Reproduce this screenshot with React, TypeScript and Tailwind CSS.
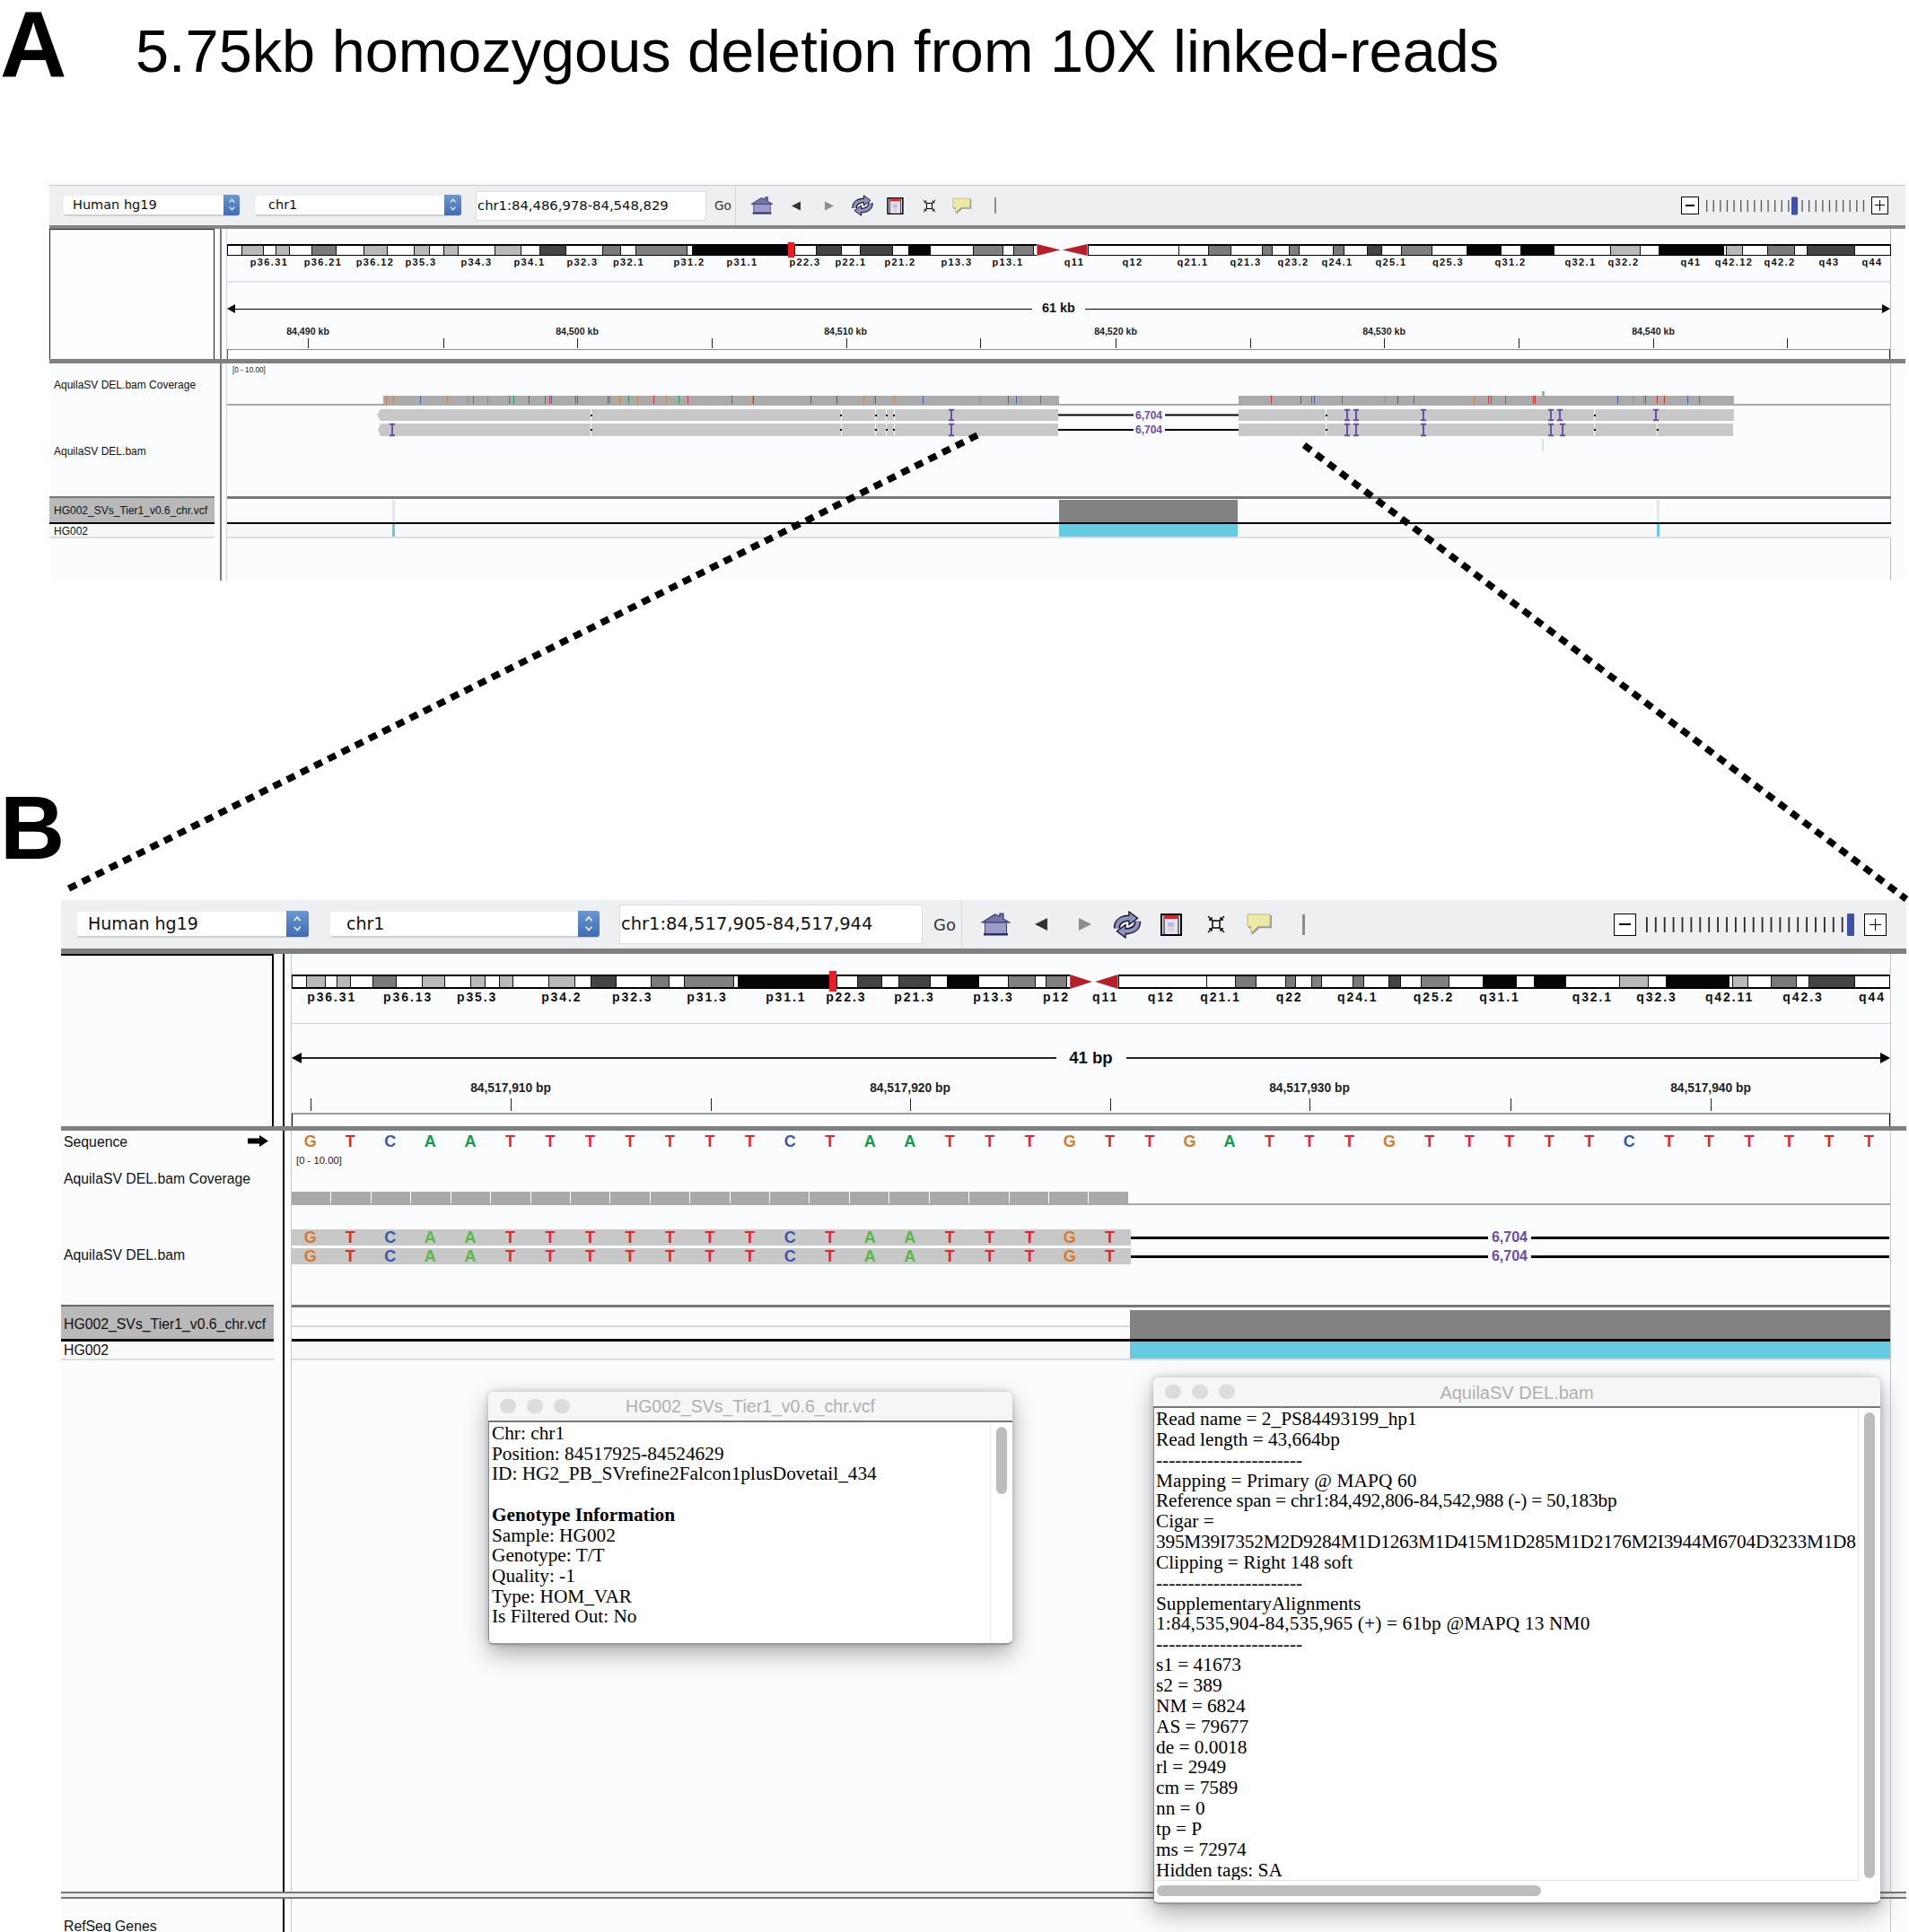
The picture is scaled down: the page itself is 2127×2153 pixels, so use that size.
import React from "react";

type Band = [number, number, string];
const W = "#ffffff", L = "#b9b9b9", M = "#7a7a7a", N = "#808080", D = "#444444", K = "#050505";

const seg = (conv: (z: number) => number, start: number, list: [number, string][]): Band[] => {
  let s = start;
  return list.map(([e, c]) => {
    const b: Band = [conv(s), conv(e), c];
    s = e;
    return b;
  });
};

const a1 = (z: number) => 40 + z / 1.508;
const a2 = (z: number) => 1080 + z / 1.4976;
const b1 = (z: number) => 60 + z / 1.5077;
const b2 = a2;

const bandsA: Band[] = [
  ...seg(a1, 322, [[346, W], [381, L], [402, W], [425, L], [463, W], [503, M], [551, W], [589, L], [635, W], [660, L], [684, W], [709, L], [771, W], [815, L], [846, W], [890, D], [951, W], [982, M], [1008, W], [1094, N], [1102, W], [1263, K], [1274, K], [1311, W], [1353, D], [1384, W], [1438, D], [1466, W], [1523, K]]),
  ...seg(a2, -65, [[6, W], [55, N], [74, W], [106, N], [113, W]]),
  ...seg(a2, 197, [[349, W], [398, W], [436, M], [488, W], [505, M], [533, W], [549, N], [606, W], [624, M], [664, W], [688, D], [721, W], [771, N], [830, W], [887, K], [920, W], [975, K], [1069, W], [1118, L], [1150, W], [1258, K], [1263, W], [1289, L], [1331, W], [1377, M], [1397, W], [1477, D], [1538, W]]),
];

const bandsB: Band[] = [
  ...seg(b1, 400, [[423, W], [456, L], [475, W], [498, L], [535, W], [575, M], [618, W], [656, L], [700, W], [723, L], [748, W], [771, L], [831, W], [875, L], [902, W], [944, D], [1003, W], [1033, M], [1059, W], [1141, N], [1149, W], [1303, K], [1315, K], [1349, W], [1390, D], [1418, W], [1472, D], [1500, W], [1555, K]]),
  ...seg(b2, 18, [[64, W], [110, N], [128, W], [162, N], [168, W]]),
  ...seg(b2, 248, [[395, W], [443, W], [477, M], [527, W], [543, M], [571, W], [587, N], [639, W], [657, M], [699, W], [719, D], [753, W], [799, N], [857, W], [912, K], [942, W], [995, K], [1085, W], [1132, L], [1162, W], [1267, K], [1273, W], [1298, L], [1337, W], [1380, M], [1401, W], [1476, D], [1538, W]]),
];

const labelsA: [string, number][] = [["p36.31", 300], ["p36.21", 360], ["p36.12", 418], ["p35.3", 469], ["p34.3", 531], ["p34.1", 590], ["p32.3", 649], ["p32.1", 700.5], ["p31.2", 768], ["p31.1", 827], ["p22.3", 897], ["p22.1", 948], ["p21.2", 1003], ["p13.3", 1066], ["p13.1", 1123], ["q11", 1197], ["q12", 1262], ["q21.1", 1329], ["q21.3", 1388], ["q23.2", 1441], ["q24.1", 1490], ["q25.1", 1550], ["q25.3", 1613.5], ["q31.2", 1683], ["q32.1", 1761], ["q32.2", 1809], ["q41", 1884], ["q42.12", 1932], ["q42.2", 1983], ["q43", 2038], ["q44", 2086]];
const labelsB: [string, number][] = [["p36.31", 369.7], ["p36.13", 454.6], ["p35.3", 531.6], ["p34.2", 625.8], ["p32.3", 704.7], ["p31.3", 788], ["p31.1", 875.8], ["p22.3", 942.8], ["p21.3", 1019], ["p13.3", 1107], ["p12", 1177], ["q11", 1231.6], ["q12", 1293.7], ["q21.1", 1360], ["q22", 1436.6], ["q24.1", 1512.7], ["q25.2", 1597.5], ["q31.1", 1671], ["q32.1", 1774.4], ["q32.3", 1846], ["q42.11", 1927], ["q42.3", 2009], ["q44", 2086]];

const O = "#d9803a", R = "#e2302f", BL = "#3f5fb0", GR = "#1e9e55";
const covA: [number, string][] = [
  ...([[588, O], [600, O], [646, BL], [690, O], [725, O], [734, GR], [758, "#8a9a4a"], [794, GR], [802, GR], [828, BL], [855, GR], [863, R], [866, BL], [907, BL], [909, R], [961, BL], [963, GR], [980, O], [995, GR], [1010, O], [1038, R], [1059, O], [1079, GR], [1095, R], [1168, R], [1203, O], [1205, R], [1301, BL], [1345, "#557"], [1391, O], [1407, O], [1410, R], [1441, O], [1490, BL]] as [number, string][]).map(([z, c]) => [a1(z), c] as [number, string]),
  ...([[17, O], [65, BL], [78, BL], [85, O], [118, GR], [503, R], [552, BL], [571, GR], [575, BL], [622, R], [694, O], [714, BL], [741, R], [841, O], [865, R], [870, GR], [894, GR], [940, R], [944, R], [1082, BL], [1106, O], [1124, O], [1128, R], [1147, R], [1159, R], [1198, BL], [1217, GR]] as [number, string][]).map(([z, c]) => [a2(z), c] as [number, string]),
];

const seqLetters = "GTCAATTTTTTTCTAATTTGTTGATTTGTTTTTCTTTTTT".split("");
const seqColor: Record<string, string> = { G: "text-[#d9782d]", T: "text-[#e8242b]", C: "text-[#3b55a8]", A: "text-[#109a4c]" };
const readColor: Record<string, string> = { G: "text-[#d9782d]", T: "text-[#e8242b]", C: "text-[#3b55a8]", A: "text-[#58b947]" };

function PageSvg({ x, y, w, h, className, children }: { x: number; y: number; w: number; h: number; className?: string; children: React.ReactNode }) {
  return (
    <svg width={w} height={h} viewBox={`${x} ${y} ${w} ${h}`} className={`block overflow-visible ${className ?? ""}`}>
      {children}
    </svg>
  );
}

function Cytoband({ bands, x, w, y, h, cen, red, sw }: { bands: Band[]; x: number; w: number; y: number; h: number; cen: [number, number, number, number]; red: [number, number, number, number]; sw: number }) {
  const end = x + w;
  return (
    <PageSvg x={x} y={y} w={w} h={h}>
      <g shapeRendering="crispEdges">
        {bands.map((b, i) => (
          <rect key={i} x={b[0]} y={y} width={b[1] - b[0]} height={h} fill={b[2]} />
        ))}
        {bands.map((b, i) =>
          bands[i + 1] && bands[i + 1][0] === b[1] ? (
            <rect key={`s${i}`} x={b[1]} y={y} width={1} height={h} fill="#111" />
          ) : null
        )}
        <rect x={x} y={y} width={cen[0] - x} height={sw} fill="#000" />
        <rect x={x} y={y + h - sw} width={cen[0] - x} height={sw} fill="#000" />
        <rect x={cen[3]} y={y} width={end - cen[3]} height={sw} fill="#000" />
        <rect x={cen[3]} y={y + h - sw} width={end - cen[3]} height={sw} fill="#000" />
        <rect x={x} y={y} width={1} height={h} fill="#000" />
        <rect x={end - 1} y={y} width={1} height={h} fill="#000" />
        <rect x={cen[3]} y={y} width={1} height={h} fill="#000" />
        <rect x={red[0]} y={red[2]} width={red[1] - red[0]} height={red[3] - red[2]} fill="#ec1c24" />
      </g>
      <polygon points={`${cen[0]},${y} ${cen[1]},${y + h / 2} ${cen[0]},${y + h}`} fill="#b5202a" />
      <polygon points={`${cen[3]},${y} ${cen[2]},${y + h / 2} ${cen[3]},${y + h}`} fill="#b5202a" />
    </PageSvg>
  );
}

function IMark({ x, y, h }: { x: number; y: number; h: number }) {
  return <path d={`M${x - 3} ${y + 0.8}h6M${x} ${y}v${h}M${x - 3} ${y + h - 0.8}h6`} stroke="#6a4da6" strokeWidth="2" fill="none" />;
}

function Nick({ x, y, h }: { x: number; y: number; h: number }) {
  return (
    <g shapeRendering="crispEdges">
      <rect x={x} y={y} width={1} height={h} fill="#ffffff" />
      <rect x={x - 0.5} y={y + h / 2 - 1} width={2} height={2} fill="#000" />
    </g>
  );
}

/* ---------- toolbar icons ---------- */
const HomeIcon = ({ className }: { className: string }) => (
  <svg viewBox="0 0 33 26" className={className}>
    <path d="M1 11 15.5 2 21 4V1h4v6l7 4Z" fill="#7474ab" stroke="#3a3a6e" strokeWidth="1.2" />
    <rect x="4.5" y="11" width="24" height="12.5" fill="#9c9cca" stroke="#3a3a6e" strokeWidth="1" />
    <rect x="3" y="23" width="27" height="2.5" fill="#2f2f66" />
  </svg>
);
const LeftIcon = ({ className }: { className: string }) => (
  <svg viewBox="0 0 14 14" className={className}><polygon points="14,0 14,14 0,7" fill="#333" /></svg>
);
const RightIcon = ({ className }: { className: string }) => (
  <svg viewBox="0 0 14 14" className={className}><polygon points="0,0 0,14 14,7" fill="#8e8e8e" /></svg>
);
const RefreshIcon = ({ className }: { className: string }) => (
  <svg viewBox="0 0 32 32" className={className}>
    <path d="M4 20C4 12 10 8.500 19 8.500" fill="none" stroke="#111" strokeWidth="7.500" />
    <path d="M28 12C28 20 22 23.500 13 23.500" fill="none" stroke="#111" strokeWidth="7.500" />
    <polygon points="18,1 28,8.500 18,16" fill="#8c90c8" stroke="#111" strokeWidth="1.300" />
    <polygon points="14,16 4,23.500 14,31" fill="#8c90c8" stroke="#111" strokeWidth="1.300" />
    <path d="M4 20C4 12 10 8.500 19 8.500" fill="none" stroke="#8c90c8" strokeWidth="4.500" />
    <path d="M28 12C28 20 22 23.500 13 23.500" fill="none" stroke="#8c90c8" strokeWidth="4.500" />
  </svg>
);
const RegionIcon = ({ className }: { className: string }) => (
  <svg viewBox="0 0 24 25" className={className}>
    <rect x="1" y="1" width="22" height="23" fill="#f2edf5" stroke="#000" strokeWidth="2" />
    <rect x="5" y="2" width="14" height="4" fill="#ec1c24" />
    <rect x="5" y="6" width="14" height="17" fill="#e2e2f2" />
    <rect x="8" y="10" width="7" height="5" fill="#b9bbe2" />
    <rect x="9" y="16" width="6" height="4" fill="#f0c6d0" />
    <path d="M4 2v21M20 2v21" stroke="#000" strokeWidth="1" />
  </svg>
);
const FitIcon = ({ className }: { className: string }) => (
  <svg viewBox="0 0 20 20" className={className}>
    <rect x="6" y="6" width="8" height="8" fill="#fff" stroke="#000" strokeWidth="1.500" />
    <path d="M1 1 5 5M19 1 15 5M1 19 5 15M19 19 15 15" stroke="#000" strokeWidth="1.300" />
    <path d="M5 2V5H2M15 2V5H18M5 18V15H2M15 18V15H18" stroke="#000" strokeWidth="1.300" fill="none" />
  </svg>
);
const BalloonIcon = ({ className }: { className: string }) => (
  <svg viewBox="0 0 30 25" className={className}>
    <polygon points="2,2 29,2 29,17 15,17 6,25 6,17 2,17" fill="#9b9b9b" />
    <polygon points="1,1 27,1 27,15 13,15 5,23 5,15 1,15" fill="#eeeaa6" stroke="#b5b38a" strokeWidth="1" />
  </svg>
);

function Slider({ step, n, sel, selW, h, w, tw, color, over }: { step: number; n: number; sel: number; selW: number; h: number; w: number; tw: number; color: string; over: number }) {
  return (
    <svg width={w} height={h} viewBox={`0 0 ${w} ${h}`} className="block overflow-visible">
      {Array.from({ length: n }).map((_, i) => (
        <rect key={i} x={i * step} y={0} width={tw} height={h} fill={color} />
      ))}
      <rect x={sel} y={-over} width={selW} height={h + over * 2} rx={1} fill="#3f50a8" />
    </svg>
  );
}

function Stepper({ className }: { className: string }) {
  return (
    <div className={`rounded-r-[3px] bg-gradient-to-b from-[#6a97d6] to-[#3f6cb6] flex items-center justify-center ${className}`}>
      <svg viewBox="0 0 10 20" className="h-[78%] w-[50%]">
        <path d="M2 7 5 3.500 8 7M2 13 5 16.500 8 13" fill="none" stroke="#fff" strokeWidth="1.300" />
      </svg>
    </div>
  );
}

function NameRow({ className, children }: { className: string; children: React.ReactNode }) {
  return <div className={`flex items-center whitespace-nowrap text-[#111] ${className}`}>{children}</div>;
}

function AbsLabel({ x, className, children }: { x: number; className: string; children: React.ReactNode }) {
  return (
    <span className={`absolute -translate-x-1/2 whitespace-nowrap leading-none ${className}`} style={{ left: x }}>
      {children}
    </span>
  );
}

/* ---------- Panel A ---------- */
function PanelA() {
  const X = 253;
  const ticks = [343, 494, 643, 793, 942.6, 1092, 1243, 1392.5, 1542, 1692, 1842, 1991];
  const tickLabels: [string, number][] = [["84,490 kb", 343], ["84,500 kb", 643], ["84,510 kb", 942], ["84,520 kb", 1243], ["84,530 kb", 1542], ["84,540 kb", 1842]];
  const nicks1 = [658, 936.6, 975, 987, 995.6, 1477, 1776];
  const nicks2 = [658, 936.6, 975, 987, 995.6, 1477, 1776, 1846];
  const i1 = [1060, 1501, 1511, 1586, 1728, 1738, 1845];
  const i2 = [437, 1060, 1501, 1511, 1586, 1728, 1741];
  return (
    <section className="ml-[55px] w-[2068px] h-[441px] bg-[#fbfcfe] flex flex-col">
      <div className="h-[45px] shrink-0 bg-[#eeeff1] border-t border-[#c6c6c6] flex items-center font-['DejaVu_Sans',sans-serif] text-[#111]">
        <div className="ml-[16px] w-[196px] h-[23px] bg-white rounded-[3px] border-b-2 border-[#cfcfcf] flex items-center justify-between text-[14.500px]">
          <span className="pl-[10px] pt-[1px]">Human hg19</span>
          <Stepper className="w-[18px] h-[23px]" />
        </div>
        <div className="ml-[18px] w-[229px] h-[23px] bg-white rounded-[3px] border-b-2 border-[#cfcfcf] flex items-center justify-between text-[14.500px]">
          <span className="pl-[14px] pt-[1px]">chr1</span>
          <Stepper className="w-[19px] h-[23px]" />
        </div>
        <div className="ml-[16px] w-[257px] h-[33px] bg-white border border-[#dcdcdc] flex items-center pl-[1px] text-[14.800px] whitespace-nowrap">chr1:84,486,978-84,548,829</div>
        <span className="ml-[9px] w-[19px] text-[13.700px] text-[#333]">Go</span>
        <div className="ml-[4px] w-px h-[45px] bg-[#d6d6d8]" />
        <HomeIcon className="ml-[16px] w-[26px] h-[20px]" />
        <LeftIcon className="ml-[20px] w-[10px] h-[11px]" />
        <RightIcon className="ml-[27px] w-[10px] h-[11px]" />
        <RefreshIcon className="ml-[19px] w-[26px] h-[24px]" />
        <RegionIcon className="ml-[14px] w-[19px] h-[19px]" />
        <FitIcon className="ml-[21px] w-[15px] h-[15px]" />
        <BalloonIcon className="ml-[18px] w-[22px] h-[19px]" />
        <div className="ml-[25px] w-[2px] h-[18px] bg-[#8c8c8c]" />
        <div className="ml-auto mr-[19px] flex items-center">
          <div className="w-[20px] h-[20px] bg-white border border-black flex items-center justify-center"><div className="w-[10px] h-[2px] bg-black" /></div>
          <div className="ml-[8px] w-[174px]">
            <Slider step={7.6} n={24} sel={95} selW={7} h={13} w={174} tw={1.3} color="#555" over={3.5} />
          </div>
          <div className="ml-[10px] w-[19px] h-[20px] bg-white border border-black relative">
            <div className="absolute left-[3px] top-[8px] w-[11px] h-px bg-black" />
            <div className="absolute left-[8px] top-[3px] w-px h-[12px] bg-black" />
          </div>
        </div>
      </div>
      <div className="h-[4px] shrink-0 bg-[#858585]" />

      <div className="h-[145px] shrink-0 flex">
        <div className="w-[184px] bg-[#fdfdfe] border-t border-r border-l border-[#222]" />
        <div className="w-[14px] pl-[6px] border-r border-[#d4d4dc]"><div className="w-[2px] h-full bg-[#7a7a7a]" /></div>
        <div className="w-[1854px] border-r border-[#bdbdc4] flex flex-col">
          <div className="h-[17px]" />
          <Cytoband bands={bandsA} x={X} w={1854} y={272} h={13} cen={[a2(113), a2(152), a2(155), a2(197)]} red={[a1(1263), a1(1274), 270, 287]} sw={1.5} />
          <div className="relative h-[28px] font-bold text-[11px] tracking-[1.400px] text-[#111]">
            {labelsA.map(([t, x]) => (
              <AbsLabel key={t} x={x - X} className="top-[2px]">{t}</AbsLabel>
            ))}
          </div>
          <div className="h-[76px] border-t-2 border-[#e1e2ea] flex flex-col">
            <div className="mt-[19px] h-[20px] flex items-center">
              <svg width="9" height="10" viewBox="0 0 9 10" className="shrink-0"><polygon points="0,5 9,0 9,10" fill="#000" /></svg>
              <div className="flex-1 h-px bg-black" />
              <span className="w-[59px] text-center font-bold text-[14.400px] text-[#111]">61 kb</span>
              <div className="flex-1 h-px bg-black" />
              <svg width="9" height="10" viewBox="0 0 9 10" className="shrink-0"><polygon points="9,5 0,0 0,10" fill="#000" /></svg>
            </div>
            <div className="relative h-[35px]">
              {tickLabels.map(([t, x]) => (
                <AbsLabel key={t} x={x - X} className="top-[10px] font-bold text-[10.600px] text-[#222]">{t}</AbsLabel>
              ))}
              <PageSvg x={X} y={377} w={1854} h={11} className="absolute left-0 top-[23px]">
                <g shapeRendering="crispEdges">
                  {ticks.map((t) => <rect key={t} x={t} y={377} width={1} height={11} fill="#222" />)}
                </g>
              </PageSvg>
            </div>
          </div>
          <div className="h-[11px] border-t border-l border-r border-t-[#8c8c8c] border-l-[#555] border-r-[#222] bg-[#fdfdfe]" />
        </div>
      </div>
      <div className="h-[5px] shrink-0 bg-[#808080]" />

      <div className="flex flex-1 min-h-0">
        <div className="w-[184px] flex flex-col text-[12px] font-['Liberation_Sans',sans-serif]">
          <NameRow className="h-[47px] pl-[5px]">AquilaSV DEL.bam Coverage</NameRow>
          <NameRow className="h-[101px] pl-[5px]">AquilaSV DEL.bam</NameRow>
          <NameRow className="h-[29px] pl-[5px] bg-[#b9b9b9] border-t-2 border-[#777]">HG002_SVs_Tier1_v0.6_chr.vcf</NameRow>
          <div className="h-[2px] bg-black" />
          <NameRow className="h-[16px] pl-[5px] pt-[1px] bg-[#f7f9f8] border-b-2 border-[#dedede]">HG002</NameRow>
        </div>
        <div className="w-[14px] pl-[6px] border-r border-[#d4d4dc]"><div className="w-[2px] h-full bg-[#7a7a7a]" /></div>
        <div className="w-[1854px] border-r border-[#bdbdc4] flex flex-col">
          <div className="relative h-[47px]">
            <PageSvg x={X} y={405} w={1854} h={47}>
              <g shapeRendering="crispEdges">
                <rect x={a1(583)} y={441} width={1180 - a1(583)} height={9} fill="#aaaaaa" />
                <rect x={1380} y={441} width={552} height={9} fill="#aaaaaa" />
                <rect x={1718} y={436} width={3} height={5} fill="#aaaaaa" />
                <rect x={X} y={450} width={1854} height={2} fill="#aaaaaa" />
                {covA.map(([x, c], i) => <rect key={i} x={x} y={441} width={1} height={9} fill={c} />)}
              </g>
            </PageSvg>
            <span className="absolute left-[6px] top-[4px] text-[8.200px] leading-none text-[#222]">[0 - 10.00]</span>
          </div>
          <div className="relative h-[101px]">
            <PageSvg x={X} y={452} w={1854} h={101}>
              <polygon points="424,456 1179,456 1179,469 424,469 420,462.500" fill="#c8c8c8" />
              <polygon points="424,472 1179,472 1179,486 424,486 421,479" fill="#c8c8c8" />
              <rect x={1380} y={456} width={552} height={13} fill="#c8c8c8" />
              <rect x={1380} y={472} width={551} height={14} fill="#c8c8c8" />
              <path d="M1179 462.500H1263M1298 462.500H1380M1179 479H1263M1298 479H1380" stroke="#000" strokeWidth="2" fill="none" />
              {nicks1.map((x) => <Nick key={x} x={x} y={456} h={13} />)}
              {nicks2.map((x) => <Nick key={x} x={x} y={472} h={14} />)}
              {i1.map((x) => <IMark key={x} x={x} y={456} h={13} />)}
              {i2.map((x) => <IMark key={x} x={x} y={472} h={14} />)}
              <rect x={1718.500} y={489} width={1} height={14} fill="#c4c4c4" />
            </PageSvg>
            <AbsLabel x={1280 - X} className="top-[5px] font-bold text-[12px] text-[#6a4da6]">6,704</AbsLabel>
            <AbsLabel x={1280 - X} className="top-[21px] font-bold text-[12px] text-[#6a4da6]">6,704</AbsLabel>
          </div>
          <PageSvg x={X} y={553} w={1854} h={47}>
            <g shapeRendering="crispEdges">
              <rect x={X} y={553} width={1854} height={3} fill="#777" />
              <rect x={437} y={557} width={3} height={25} fill="#e6e7ea" />
              <rect x={1845.500} y={557} width={3} height={25} fill="#e6e7ea" />
              <rect x={1179.500} y={557} width={199.500} height={25} fill="#828282" />
              <rect x={X} y={582} width={1854} height={2} fill="#000" />
              <rect x={X} y={584} width={1854} height={14} fill="#f7f9f8" />
              <rect x={437} y={584} width={3} height={14} fill="#66cbe0" />
              <rect x={1179.500} y={584} width={199.500} height={14} fill="#66cbe0" />
              <rect x={1845.500} y={584} width={3} height={14} fill="#66cbe0" />
              <rect x={X} y={598} width={1854} height={2} fill="#dedede" />
            </g>
          </PageSvg>
        </div>
      </div>
    </section>
  );
}

/* ---------- Panel B ---------- */
function ReadRowB({ className }: { className: string }) {
  return (
    <div className={`h-[18px] flex items-center pr-[1px] ${className}`}>
      <div className="w-[935px] h-[18px] bg-[#c8c8c8] flex font-bold text-[18px] leading-[18px]">
        {seqLetters.slice(0, 21).map((c, i) => (
          <span key={i} className={`flex-1 text-center pr-[3px] ${readColor[c]}`}>{c}</span>
        ))}
      </div>
      <div className="w-[398px] h-[3px] bg-black" />
      <span className="w-[48px] text-center font-bold text-[16px] leading-none text-[#6a4da6]">6,704</span>
      <div className="flex-1 h-[3px] bg-black" />
    </div>
  );
}

function PopupChrome({ title, children, className, titleClass }: { title: string; children: React.ReactNode; className: string; titleClass: string }) {
  return (
    <div className={`absolute rounded-[6px] overflow-hidden bg-white flex flex-col shadow-[0_10px_28px_rgba(0,0,0,0.32),0_0_6px_rgba(0,0,0,0.2)] ${className}`}>
      <div className="relative h-[34px] shrink-0 bg-[#f6f6f6] border-b-2 border-[#777] flex items-center justify-center text-[#b0b0b0]">
        <div className="absolute left-[13px] flex gap-[12px]">
          <div className="w-[18px] h-[16px] rounded-full bg-[#dcdcdc]" />
          <div className="w-[18px] h-[16px] rounded-full bg-[#dcdcdc]" />
          <div className="w-[18px] h-[16px] rounded-full bg-[#dcdcdc]" />
        </div>
        <span className={`pt-[2px] ${titleClass}`}>{title}</span>
      </div>
      {children}
    </div>
  );
}

const vcfLines: [string, boolean][] = [["Chr: chr1", false], ["Position: 84517925-84524629", false], ["ID: HG2_PB_SVrefine2Falcon1plusDovetail_434", false], ["\u00a0", false], ["Genotype Information", true], ["Sample: HG002", false], ["Genotype: T/T", false], ["Quality: -1", false], ["Type: HOM_VAR", false], ["Is Filtered Out: No", false]];
const dash = "-----------------------";
const bamLines: [string, string][] = [["Read name = 2_PS84493199_hp1", ""], ["Read length = 43,664bp", ""], [dash, ""], ["Mapping = Primary @ MAPQ 60", "tracking-[0.15px]"], ["Reference span = chr1:84,492,806-84,542,988 (-) = 50,183bp", "tracking-[-0.2px]"], ["Cigar =", ""], ["395M39I7352M2D9284M1D1263M1D415M1D285M1D2176M2I3944M6704D3233M1D8", "tracking-[-0.2px]"], ["Clipping = Right 148 soft", ""], [dash, ""], ["SupplementaryAlignments", ""], ["1:84,535,904-84,535,965 (+) = 61bp @MAPQ 13 NM0", "tracking-[0.17px]"], [dash, ""], ["s1 = 41673", ""], ["s2 = 389", ""], ["NM = 6824", ""], ["AS = 79677", ""], ["de = 0.0018", ""], ["rl = 2949", ""], ["cm = 7589", ""], ["nn = 0", ""], ["tp = P", ""], ["ms = 72974", ""], ["Hidden tags: SA", ""]];

function PanelB() {
  const ticks = [346, 569, 792, 1014, 1237, 1459, 1683, 1906];
  const tickLabels: [string, number][] = [["84,517,910 bp", 569], ["84,517,920 bp", 1014], ["84,517,930 bp", 1459], ["84,517,940 bp", 1906]];
  return (
    <section className="relative ml-[68px] w-[2056px] h-[1150px] bg-[#fbfcfe] flex flex-col">
      <div className="h-[54px] shrink-0 bg-[#eeeff1] flex items-center font-['DejaVu_Sans',sans-serif] text-[#111]">
        <div className="ml-[18px] w-[258px] h-[29px] bg-white rounded-[3px] border-b-2 border-[#cfcfcf] flex items-center justify-between text-[19px]">
          <span className="pl-[12px]">Human hg19</span>
          <Stepper className="w-[25px] h-[29px]" />
        </div>
        <div className="ml-[24px] w-[300px] h-[29px] bg-white rounded-[3px] border-b-2 border-[#cfcfcf] flex items-center justify-between text-[19px]">
          <span className="pl-[18px]">chr1</span>
          <Stepper className="w-[24px] h-[29px]" />
        </div>
        <div className="ml-[22px] w-[338px] h-[44px] bg-white border border-[#dcdcdc] flex items-center pl-[1px] text-[19.500px] whitespace-nowrap">chr1:84,517,905-84,517,944</div>
        <span className="ml-[12px] w-[25px] text-[18px] text-[#333]">Go</span>
        <div className="ml-[6px] w-px h-[54px] bg-[#d6d6d8]" />
        <HomeIcon className="ml-[21px] w-[33px] h-[26px]" />
        <LeftIcon className="ml-[27px] w-[14px] h-[14px]" />
        <RightIcon className="ml-[35px] w-[14px] h-[14px]" />
        <RefreshIcon className="ml-[24px] w-[32px] h-[31px]" />
        <RegionIcon className="ml-[21px] w-[24px] h-[25px]" />
        <FitIcon className="ml-[28px] w-[20px] h-[20px]" />
        <BalloonIcon className="ml-[24px] w-[29px] h-[24px]" />
        <div className="ml-[33px] w-[3px] h-[23px] bg-[#8c8c8c]" />
        <div className="ml-auto mr-[22px] flex items-center">
          <div className="w-[25px] h-[25px] bg-white border border-black flex items-center justify-center"><div className="w-[13px] h-[2px] bg-black" /></div>
          <div className="ml-[11px] w-[232px]">
            <Slider step={9.9} n={23} sel={224} selW={8} h={17} w={232} tw={1.8} color="#2a2a2a" over={4} />
          </div>
          <div className="ml-[11px] w-[25px] h-[25px] bg-white border border-black relative">
            <div className="absolute left-[5px] top-[11px] w-[13px] h-px bg-black" />
            <div className="absolute left-[11px] top-[5px] w-px h-[13px] bg-black" />
          </div>
        </div>
      </div>
      <div className="h-[6px] shrink-0 bg-[#808080]" />

      <div className="h-[192px] shrink-0 flex">
        <div className="w-[237px] bg-[#fbfcfe] border-t-2 border-r-2 border-black" />
        <div className="w-[19px] pl-[10px]"><div className="w-[2px] h-full bg-black" /></div>
        <div className="w-[1783px] border-l border-r border-[#c6c6cc] flex flex-col">
          <div className="h-[23px]" />
          <Cytoband bands={bandsB} x={325} w={1781} y={1086} h={16} cen={[b2(168), b2(205), b2(210), b2(248)]} red={[b1(1303), b1(1315), 1082, 1105]} sw={2} />
          <div className="relative h-[38px] font-bold text-[14px] tracking-[1.900px] text-[#111]">
            {labelsB.map(([t, x]) => (
              <AbsLabel key={t} x={x - 325} className="top-[2px]">{t}</AbsLabel>
            ))}
          </div>
          <div className="h-[100px] border-t border-[#cfd0d6] flex flex-col">
            <div className="mt-[28px] h-[20px] flex items-center">
              <svg width="11" height="12" viewBox="0 0 11 12" className="shrink-0"><polygon points="0,6 11,0 11,12" fill="#000" /></svg>
              <div className="flex-1 h-[2px] bg-[#222]" />
              <span className="w-[78px] text-center font-bold text-[18.500px] text-[#111]">41 bp</span>
              <div className="flex-1 h-[2px] bg-[#222]" />
              <svg width="11" height="12" viewBox="0 0 11 12" className="shrink-0"><polygon points="11,6 0,0 0,12" fill="#000" /></svg>
            </div>
            <div className="relative h-[51px]">
              {tickLabels.map(([t, x]) => (
                <AbsLabel key={t} x={x - 325} className="top-[17px] font-bold text-[13.800px] text-[#222]">{t}</AbsLabel>
              ))}
              <PageSvg x={325} y={1224} w={1781} h={14} className="absolute left-0 top-[35px]">
                <g shapeRendering="crispEdges">
                  {ticks.map((t) => <rect key={t} x={t} y={1224} width={1} height={14} fill="#222" />)}
                </g>
              </PageSvg>
            </div>
          </div>
          <div className="h-[15px] border-t-2 border-l border-r border-t-[#9a9aa0] border-l-black border-r-black bg-[#fdfdfe]" />
        </div>
      </div>
      <div className="h-[5px] shrink-0 bg-[#808080]" />

      <div className="flex h-[848px] shrink-0">
        <div className="w-[237px] flex flex-col text-[15.800px]">
          <NameRow className="h-[25px] pl-[3px] pr-[6px] justify-between">
            <span>Sequence</span>
            <svg width="23" height="13" viewBox="0 0 23 13" className="-mt-[3px]"><path d="M0 3.500H13V0L23 6.500 13 13V9.500H0Z" fill="#000" /></svg>
          </NameRow>
          <NameRow className="h-[58px] pl-[3px]">AquilaSV DEL.bam Coverage</NameRow>
          <NameRow className="h-[111px] pl-[3px]">AquilaSV DEL.bam</NameRow>
          <NameRow className="h-[38px] pl-[3px] pt-[3px] bg-[#b9b9b9] border-t-2 border-[#666]">HG002_SVs_Tier1_v0.6_chr.vcf</NameRow>
          <div className="h-[3px] bg-black" />
          <NameRow className="h-[21px] pl-[3px] pt-[1px] bg-[#f8f9f9] border-b-2 border-[#dcdcdc]">HG002</NameRow>
        </div>
        <div className="w-[19px] pl-[10px]"><div className="w-[2px] h-full bg-black" /></div>
        <div className="w-[1783px] border-l border-r border-[#c6c6cc] flex flex-col">
          <div className="h-[25px] flex font-bold text-[18px] leading-[25px]">
            {seqLetters.map((c, i) => (
              <span key={i} className={`flex-1 text-center pr-[3px] ${seqColor[c]}`}>{c}</span>
            ))}
          </div>
          <div className="h-[58px] flex flex-col">
            <span className="pl-[5px] h-[43px] pt-[1px] text-[11.300px] leading-[14px] text-[#222]">[0 - 10.00]</span>
            <div className="h-[13px] w-[932px] flex">
              {Array.from({ length: 21 }).map((_, i) => (
                <div key={i} className="flex-1 bg-[#a9a9a9] border-r border-white last:border-r-0" />
              ))}
            </div>
            <div className="h-[2px] bg-[#a9a9a9]" />
          </div>
          <div className="h-[111px] flex flex-col">
            <ReadRowB className="mt-[27px]" />
            <ReadRowB className="mt-[3px]" />
          </div>
          <div className="h-[3px] bg-[#777]" />
          <div className="h-[35px] flex">
            <div className="w-[934px] h-[22px] border-b-2 border-[#d6d6d6]" />
            <div className="flex-1 mt-[3px] bg-[#828282]" />
          </div>
          <div className="h-[3px] bg-black" />
          <div className="h-[21px] flex bg-[#f6f8f7] border-b-2 border-[#dcdcdc]">
            <div className="w-[934px]" />
            <div className="flex-1 bg-[#66cbe0]" />
          </div>
        </div>
      </div>

      <div className="h-[8px] shrink-0 border-y-2 border-[#777] bg-[#ececec]" />

      <div className="flex flex-1 min-h-0">
        <div className="w-[237px] pl-[3px] pt-[23px] text-[15.800px] leading-none text-[#111]">RefSeq Genes</div>
        <div className="w-[19px] pl-[10px]"><div className="w-[2px] h-full bg-black" /></div>
        <div className="w-[1783px] border-l border-r border-[#c6c6cc]" />
      </div>

      <PopupChrome title="HG002_SVs_Tier1_v0.6_chr.vcf" titleClass="text-[19.500px]" className="left-[476px] top-[548px] w-[584px] h-[282px] border-b-2 border-[#999]">
        <div className="relative flex-1 font-['Liberation_Serif',serif] text-[21.300px] leading-[22.700px] text-black pl-[3px] pt-[1px] border-l border-[#888]">
          {vcfLines.map(([t, b], i) => (
            <div key={i} className={`whitespace-pre ${b ? "font-bold" : ""}`}>{t}</div>
          ))}
          <div className="absolute right-0 top-0 bottom-0 w-[25px] border-l border-[#ececec]">
            <div className="ml-[6px] mt-[5px] w-[12px] h-[75px] rounded-full bg-[#bdbdbd]" />
          </div>
        </div>
      </PopupChrome>

      <PopupChrome title="AquilaSV DEL.bam" titleClass="text-[20px]" className="left-[1217px] top-[532px] w-[810px] h-[587px] border-b-2 border-[#999]">
        <div className="relative flex-1 font-['Liberation_Serif',serif] text-[21.300px] leading-[22.850px] text-black border-l border-[#888]">
          <div className="w-[785px] h-[527px] overflow-hidden pl-[2px] pt-[1px] border-b border-[#e4e4e4]">
            {bamLines.map(([t, c], i) => (
              <div key={i} className={`whitespace-nowrap ${c}`}>{t}</div>
            ))}
          </div>
          <div className="absolute right-0 top-0 h-[527px] w-[25px] border-l border-[#e8e8e8]">
            <div className="ml-[6px] mt-[5px] w-[12px] h-[519px] rounded-full bg-[#bdbdbd]" />
          </div>
          <div className="ml-[3px] mt-[5px] w-[428px] h-[12px] rounded-full bg-[#bdbdbd]" />
        </div>
      </PopupChrome>
    </section>
  );
}

export default function App() {
  return (
    <div className="relative w-[2127px] h-[2153px] bg-white overflow-hidden font-['Liberation_Sans',sans-serif]">
      <header className="h-[206px] flex items-start text-black">
        <h1 className="w-[151px] font-bold text-[103px] leading-[99px]">A</h1>
        <h2 className="mt-[24px] text-[66.660px] font-normal leading-none whitespace-nowrap">5.75kb homozygous deletion from 10X linked-reads</h2>
      </header>
      <PanelA />
      <div className="h-[356px] pt-[225px] pl-[0px] font-bold text-[100px] leading-none text-black">B</div>
      <PanelB />
      <svg width="2127" height="2153" viewBox="0 0 2127 2153" className="absolute inset-0 pointer-events-none">
        <path d="M1089 485 75 991" stroke="#000" strokeWidth="7.500" strokeDasharray="9.500 7.500" fill="none" />
        <path d="M1453 496 2124 1002" stroke="#000" strokeWidth="7.500" strokeDasharray="9.500 7.500" fill="none" />
      </svg>
    </div>
  );
}
